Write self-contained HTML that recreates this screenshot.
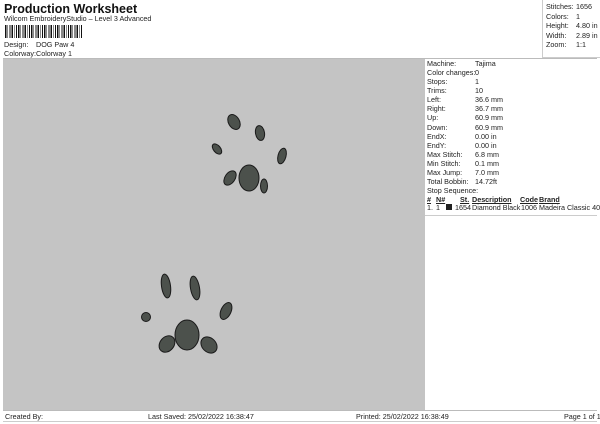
<!DOCTYPE html>
<html><head><meta charset="utf-8"><style>
*{margin:0;padding:0;box-sizing:border-box}
body{width:600px;height:424px;background:#fff;font-family:"Liberation Sans",Arial,sans-serif;color:#222;position:relative;overflow:hidden;font-size:7.2px}
.a{position:absolute;white-space:nowrap;line-height:9px}
</style></head><body>
<div class="a" style="left:4px;top:2px;font-size:12.5px;font-weight:bold;line-height:14px;color:#111">Production Worksheet</div>
<div class="a" style="left:4px;top:14px">Wilcom EmbroideryStudio – Level 3 Advanced</div>
<div style="position:absolute;left:5px;top:25px;width:78px;height:13px;background:repeating-linear-gradient(90deg,#111 0 1.5px,#fff 1.5px 2.5px,#111 2.5px 3.2px,#fff 3.2px 4.3px,#111 4.3px 5.5px,#fff 5.5px 6.5px)"></div>
<div class="a" style="left:4px;top:40px">Design:</div><div class="a" style="left:36px;top:40px">DOG Paw 4</div>
<div class="a" style="left:4px;top:49px">Colorway:</div><div class="a" style="left:36px;top:49px">Colorway 1</div>
<div style="position:absolute;left:542px;top:0;width:58px;height:58px;border-left:1px solid #ccc;border-bottom:1px solid #ccc"></div>
<div class="a" style="left:546px;top:2px">Stitches:</div><div class="a" style="left:576px;top:2px">1656</div>
<div class="a" style="left:546px;top:11.5px">Colors:</div><div class="a" style="left:576px;top:11.5px">1</div>
<div class="a" style="left:546px;top:21px">Height:</div><div class="a" style="left:576px;top:21px">4.80 in</div>
<div class="a" style="left:546px;top:30.5px">Width:</div><div class="a" style="left:576px;top:30.5px">2.89 in</div>
<div class="a" style="left:546px;top:40px">Zoom:</div><div class="a" style="left:576px;top:40px">1:1</div>
<div style="position:absolute;left:3px;top:58px;width:594px;border-top:1px solid #bbb"></div>
<div style="position:absolute;left:3px;top:59px;width:422px;height:351px;background:#c4c4c4"></div>
<div style="position:absolute;left:425px;top:215px;width:172px;border-top:1px solid #ccc"></div>
<div id="r"></div>
<div class="a" style="left:427px;top:186px">Stop Sequence:</div>
<div class="a" style="left:427px;top:195px;font-weight:bold;text-decoration:underline">#</div>
<div class="a" style="left:436px;top:195px;font-weight:bold;text-decoration:underline">N#</div>
<div class="a" style="left:460px;top:195px;font-weight:bold;text-decoration:underline">St.</div>
<div class="a" style="left:472px;top:195px;font-weight:bold;text-decoration:underline">Description</div>
<div class="a" style="left:520px;top:195px;font-weight:bold;text-decoration:underline">Code</div>
<div class="a" style="left:539px;top:195px;font-weight:bold;text-decoration:underline">Brand</div>
<div class="a" style="left:427px;top:203px">1.</div><div class="a" style="left:436px;top:203px">1</div>
<div style="position:absolute;left:446px;top:204px;width:6px;height:6px;background:#222"></div>
<div class="a" style="left:455px;top:203px">1654</div><div class="a" style="left:472px;top:203px">Diamond Black</div>
<div class="a" style="left:521px;top:203px">1006</div><div class="a" style="left:539px;top:203px">Madeira Classic 40</div>
<div style="position:absolute;left:3px;top:410px;width:594px;height:12px;border-top:1px solid #bbb;border-bottom:1px solid #ccc"></div>
<div class="a" style="left:5px;top:411.5px">Created By:</div>
<div class="a" style="left:148px;top:411.5px">Last Saved: 25/02/2022 16:38:47</div>
<div class="a" style="left:356px;top:411.5px">Printed: 25/02/2022 16:38:49</div>
<div class="a" style="left:564px;top:411.5px">Page 1 of 1</div>
<svg style="position:absolute;left:0;top:0" width="600" height="424">
<g fill="#4c514c" stroke="#1a1a1a" stroke-width="1">
<ellipse cx="234" cy="122" rx="5.5" ry="8" transform="rotate(-30 234 122)"/>
<ellipse cx="260" cy="133" rx="4.5" ry="7.5" transform="rotate(-10 260 133)"/>
<ellipse cx="217" cy="149" rx="3.5" ry="6" transform="rotate(-40 217 149)"/>
<ellipse cx="282" cy="156" rx="4" ry="8" transform="rotate(15 282 156)"/>
<ellipse cx="249" cy="178" rx="10" ry="13"/>
<ellipse cx="230" cy="178" rx="5" ry="8" transform="rotate(35 230 178)"/>
<ellipse cx="264" cy="186" rx="3.5" ry="7"/>
<ellipse cx="166" cy="286" rx="4.5" ry="12" transform="rotate(-8 166 286)"/>
<ellipse cx="195" cy="288" rx="4.5" ry="12" transform="rotate(-10 195 288)"/>
<ellipse cx="146" cy="317" rx="4.5" ry="4.5"/>
<ellipse cx="226" cy="311" rx="5" ry="9" transform="rotate(25 226 311)"/>
<ellipse cx="187" cy="335" rx="12" ry="15"/>
<ellipse cx="167" cy="344" rx="7" ry="9" transform="rotate(40 167 344)"/>
<ellipse cx="209" cy="345" rx="7" ry="9" transform="rotate(-45 209 345)"/>
</g></svg>
<script>
var L=[["Machine:","Tajima"],["Color changes:","0"],["Stops:","1"],["Trims:","10"],["Left:","36.6 mm"],["Right:","36.7 mm"],["Up:","60.9 mm"],["Down:","60.9 mm"],["EndX:","0.00 in"],["EndY:","0.00 in"],["Max Stitch:","6.8 mm"],["Min Stitch:","0.1 mm"],["Max Jump:","7.0 mm"],["Total Bobbin:","14.72ft"]];
var h="";L.forEach(function(r,i){var t=58.5+i*9.15;h+='<div class="a" style="left:427px;top:'+t+'px">'+r[0]+'</div><div class="a" style="left:475px;top:'+t+'px">'+r[1]+'</div>';});
document.getElementById("r").innerHTML=h;
</script>
</body></html>
